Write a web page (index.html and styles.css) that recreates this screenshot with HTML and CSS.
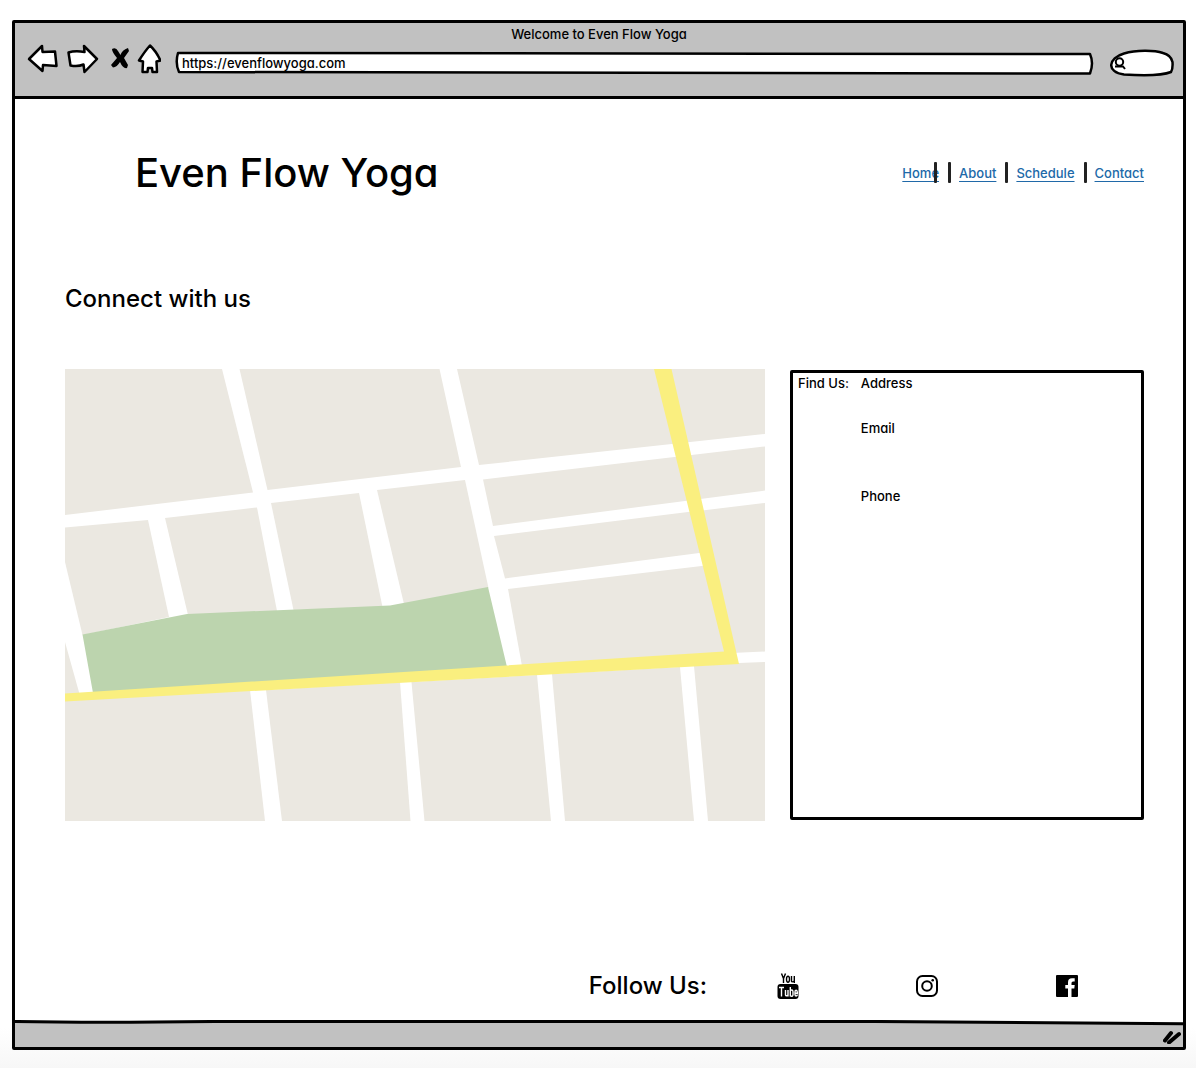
FILE: index.html
```html
<!DOCTYPE html>
<html lang="en">
<head>
<meta charset="utf-8">
<meta name="viewport" content="width=device-width, initial-scale=1">
<title>Welcome to Even Flow Yoga</title>
<link rel="stylesheet" href="styles.css">
</head>
<body>
<div class="window">
  <header class="chrome">
    <div class="chrome-title">Welcome to Even Flow Yoga</div>
    <div class="toolbar">
      <div class="tools">
        <button class="tool" type="button" aria-label="Back">
          <svg width="32" height="30" viewBox="0 0 32 30"><path class="ink" d="M2 15 15 2 15.500 8 28 7.500 29.500 22 16 21 15.500 27Z"/></svg>
        </button>
        <button class="tool" type="button" aria-label="Forward">
          <svg width="32" height="30" viewBox="0 0 32 30"><path class="ink" d="M30 15 17 2 17.500 8Q8 6.500 1.500 8.500L3.500 21.500Q11 23 16.500 20.500L17.500 28Z"/></svg>
        </button>
        <button class="tool tool-stop" type="button" aria-label="Stop">
          <svg width="18" height="22" viewBox="0 0 18 22"><path d="M1 1Q5-1 7 3L9.500 7Q11 2 17 0L18 3 13 10 17 17 16 20Q12 21 9 14Q6 19 2 19.500L0 17 6 10Q1 4 1 1Z"/></svg>
        </button>
        <button class="tool" type="button" aria-label="Home">
          <svg width="24" height="30" viewBox="0 0 24 30"><path class="ink" d="M13 1.500Q8 7 2 16.500L6 17.500 5.500 28 10.500 28 11 24 15 24 15.500 28 20 28 19.500 17.500 23.500 16.500Q19 7 13 1.500Z"/></svg>
        </button>
      </div>
      <div class="address">
        <svg class="outline" viewBox="0 0 918 24" preserveAspectRatio="none" aria-hidden="true"><path class="ink" d="M3 2 914 3Q918 12 914 22.500L4 21Q0 12 3 2Z"/></svg>
        <input class="address-input" type="text" aria-label="Address" value="https://evenflowyoga.com">
      </div>
      <div class="search">
        <svg class="outline" viewBox="0 0 64 28" preserveAspectRatio="none" aria-hidden="true"><path class="ink" d="M14 25.500C-4 23-2 9 14 4.500C26 1 44 1 53 4Q61 6 62.500 13Q63 20 61 23C50 27.500 30 26.500 14 25.500Z"/></svg>
        <svg class="lens" width="12" height="13" viewBox="0 0 12 13" aria-hidden="true"><circle cx="5.500" cy="5" r="3.700"/><path d="M1 9.500h8l2 2.500"/></svg>
        <input class="search-input" type="text" aria-label="Search">
      </div>
    </div>
  </header>

  <div class="page">
    <div class="masthead">
      <h1 class="brand">Even Flow Yoga</h1>
      <nav class="nav" aria-label="Main">
        <a class="nav-link current" href="#home">Home</a>
        <a class="nav-link" href="#about">About</a>
        <a class="nav-link" href="#schedule">Schedule</a>
        <a class="nav-link" href="#contact">Contact</a>
      </nav>
    </div>
    <main>
      <h2 class="heading">Connect with us</h2>
      <div class="columns">
        <svg class="map" viewBox="65 369 700 452" role="img" aria-label="Street map">
          <g class="block">
            <path d="M65 369H222L253 492.500 65 515Z"/>
            <path d="M239.500 369H439.500L461 467 267.500 490Z"/>
            <path d="M457 369H765V434L479 465Z"/>
            <path d="M65 527.500 148 520 169 617 82.500 635 65 562Z"/>
            <path d="M165 518 257 507.500 277 611 188 615Z"/>
            <path d="M271 503 359 493 382.500 607 293.500 610Z"/>
            <path d="M377 490 465 480 488.500 588 404 604Z"/>
            <path d="M483 479.500 765 446.500V490.500L493 526Z"/>
            <path d="M494 536 692 511.500 703 552.500 505 578.500Z"/>
            <path d="M698 511 765 503V651.500L732 653Z"/>
            <path d="M508 589 710 565 730 654 522 666Z"/>
            <path d="M65 642 79.500 694H65Z"/>
            <path d="M65 700 250 690 265 821H65Z"/>
            <path d="M266 690 400 682 410.500 821H282Z"/>
            <path d="M411.500 682 537 675 551 821H424.500Z"/>
            <path d="M552 674 680 667 694 821H565Z"/>
            <path d="M694 666 739 663 765 662V821H708Z"/>
          </g>
          <path class="park" d="M82.500 634.500 187 614 390 605.500 488 587 507 667 93 693Z"/>
          <path class="highway" d="M654 369H671.500L739 664 65 701.500V693.500L724 651.500Z"/>
        </svg>
        <section class="contact">
          <h3 class="contact-title">Find Us:</h3>
          <ul class="contact-list">
            <li class="contact-item">Address</li>
            <li class="contact-item">Email</li>
            <li class="contact-item">Phone</li>
          </ul>
        </section>
      </div>
    </main>
    <footer class="follow">
      <h2 class="heading">Follow Us:</h2>
      <div class="socials">
        <a class="social" href="#youtube" aria-label="YouTube">
          <svg width="22" height="28" viewBox="0 0 22 28">
            <path class="thin" d="M4.500 1.500 6.500 6.500 8.500 1.500M6.500 6V11M14.500 4V9.200Q14.700 10.500 17.300 9.200M17.300 4V11"/>
            <ellipse class="thin" cx="11" cy="7.300" rx="1.500" ry="3"/>
            <rect x=".5" y="12" width="21" height="15" rx="3"/>
            <path class="thin light" d="M2 15.500H7M4.500 15.500V24.500M8.500 18V23Q9 24.500 11 23M11 18V24.500M13.300 15V24.500M13.300 18.500Q16 17 16 20V22.500Q16 25 13.300 23.800M18 21.200H20.300V20Q20 18.200 19 18.300 18 18.300 18 20V22.500Q18 24 19.200 24 20.300 23.800 20.300 22.500"/>
          </svg>
        </a>
        <a class="social" href="#instagram" aria-label="Instagram">
          <svg width="24" height="24" viewBox="0 0 24 24"><rect class="ring" x="2" y="2" width="20" height="20" rx="5.500"/><circle class="ring" cx="12" cy="12" r="4.800"/><circle cx="17.700" cy="6.300" r="1.300"/></svg>
        </a>
        <a class="social" href="#facebook" aria-label="Facebook">
          <svg width="24" height="24" viewBox="0 0 24 24"><path d="M2 1H22Q23 1 23 2V22Q23 23 22 23H16.500V14.500H19.300L19.700 11H16.500V9Q16.500 7.500 18 7.500H19.700V4.300H17Q13 4.300 13 8.500V11H10.300V14.500H13V23H2Q1 23 1 22V2Q1 1 2 1Z"/></svg>
        </a>
      </div>
    </footer>
  </div>

  <div class="status">
    <svg class="outline" viewBox="0 0 1168 28" preserveAspectRatio="none" aria-hidden="true"><path class="fill" d="M0 1.500Q80 3 200 1.500H860L1168 4V28H0Z"/><path class="edge" d="M0 1.500Q80 3 200 1.500H860L1168 4"/></svg>
    <svg class="grip" width="18" height="14" viewBox="0 0 18 14" aria-hidden="true"><path d="M2 10.500 8 3M6 12.500 16 4"/></svg>
  </div>
</div>
</body>
</html>
```
FILE: styles.css
```css
* { box-sizing: border-box; }

body {
  margin: 0;
  min-height: 100vh;
  display: flex;
  padding: 20px 10px 18px 12px;
  background: linear-gradient(to top, #f7f7f7, #fff 40px);
  color: #000;
  font: 500 13px/20px Inter, "Liberation Sans", sans-serif;
  font-feature-settings: "cv11";
}

h1, h2, h3, ul { margin: 0; padding: 0; font-weight: 500; }

.window {
  flex: 1;
  display: flex;
  flex-direction: column;
  border: 3px solid #000;
  border-radius: 2px;
  background: #fff;
}

.ink {
  fill: #fff;
  stroke: #000;
  stroke-width: 2.5;
  stroke-linejoin: round;
  vector-effect: non-scaling-stroke;
}

.outline {
  position: absolute;
  inset: 0;
  width: 100%;
  height: 100%;
}

.chrome {
  height: 76px;
  border-bottom: 3px solid #000;
  background: #c1c1c1;
}

.chrome-title { height: 18px; line-height: 22px; text-align: center; }

.toolbar {
  display: flex;
  align-items: center;
  padding: 0 9px 0 12px;
}

.tools {
  display: flex;
  align-items: center;
  gap: 8px;
  margin-right: 14px;
}

.tool { display: flex; padding: 0; border: 0; background: none; }
.tool-stop { margin-left: 4px; }

.address {
  position: relative;
  flex: 1;
  height: 24px;
  margin: 8px 16px 0 0;
}

.address-input, .search-input {
  position: relative;
  width: 100%;
  height: 24px;
  padding: 0 7px;
  border: 0;
  outline: 0;
  background: none;
  color: inherit;
  font: inherit;
  font-feature-settings: inherit;
}

.search { position: relative; width: 64px; height: 28px; margin-top: 8px; }
.search-input { padding-left: 18px; }

.lens {
  position: absolute;
  left: 4px;
  top: 8px;
  fill: none;
  stroke: #000;
  stroke-width: 2;
}

.page {
  flex: 1;
  display: flex;
  flex-direction: column;
  padding: 49px 39px 16px 50px;
}

.masthead {
  display: flex;
  align-items: center;
  justify-content: space-between;
  padding-left: 70px;
}

.brand { font-size: 40px; line-height: 50px; }

.nav { display: flex; gap: 20px; }

.nav-link {
  position: relative;
  color: #2069a8;
  text-decoration: underline;
  text-decoration-thickness: 1px;
  text-underline-offset: 3px;
}

.nav-link + .nav-link::before, .current::after {
  content: "";
  position: absolute;
  top: -1px;
  left: -11px;
  width: 3px;
  height: 21px;
  border-radius: 1px;
  background: #222;
}

.current::after { left: auto; right: 2px; }

.heading { font-size: 24px; line-height: 30px; }

main { padding-top: 86px; }

.columns {
  display: grid;
  grid-template-columns: 700fr 354fr;
  gap: 25px;
  margin-top: 55px;
}

.map { display: block; width: 100%; }
.block { fill: #ebe8e1; }
.park { fill: #bcd4ae; }
.highway { fill: #faef7f; }

.contact {
  display: flex;
  gap: 12px;
  margin: 1px 0;
  padding: 0 5px;
  border: 3px solid #000;
  border-radius: 2px;
}

.contact-title { font-size: 13px; }
.contact-list { list-style: none; }
.contact-item + .contact-item { margin-top: 25px; }
.contact-item:last-child { margin-top: 48px; }

.follow {
  display: flex;
  align-items: center;
  gap: 70px;
  margin-top: auto;
  padding: 0 65px 3px 0;
  justify-content: flex-end;
}

.socials { display: flex; align-items: center; gap: 116px; }
.social { display: flex; color: #000; }

.thin { fill: none; stroke: #000; stroke-width: 1.4; }
.light { stroke: #fff; }
.ring { fill: none; stroke: #000; stroke-width: 2; }

.status {
  position: relative;
  display: flex;
  align-items: center;
  justify-content: flex-end;
  height: 27px;
  padding: 6px 2px 0 0;
}

.fill { fill: #c1c1c1; }
.edge { fill: none; stroke: #000; stroke-width: 3; vector-effect: non-scaling-stroke; }
.grip { position: relative; fill: none; stroke: #000; stroke-width: 4; stroke-linecap: round; }
```
